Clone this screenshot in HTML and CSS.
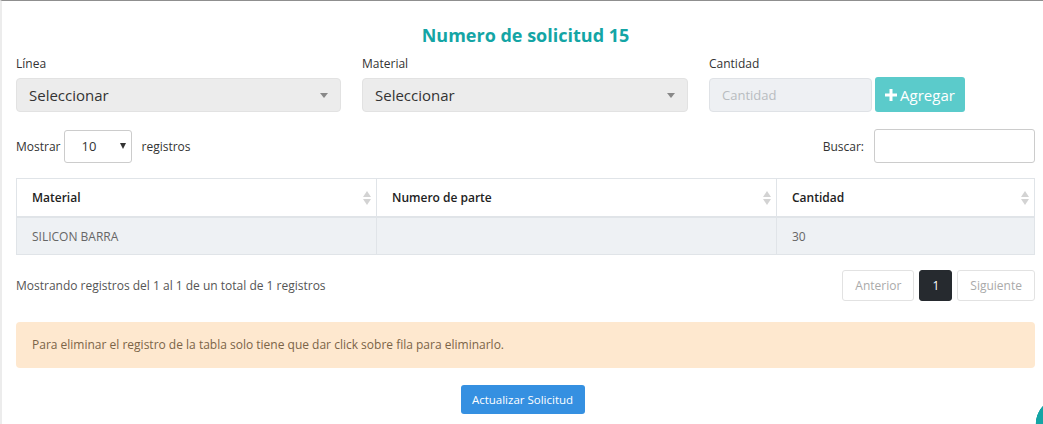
FILE: index.html
```html
<!DOCTYPE html>
<html lang="es">
<head>
<meta charset="utf-8">
<title>Solicitud</title>
<link rel="stylesheet" href="styles.css">
</head>
<body>
<div class="page">
  <h2 class="title">Numero de solicitud 15</h2>
  <div class="form-row">
    <div class="field">
      <label class="lbl">Línea</label>
      <div class="select-box"><span>Seleccionar</span><span class="caret"></span></div>
    </div>
    <div class="field">
      <label class="lbl">Material</label>
      <div class="select-box"><span>Seleccionar</span><span class="caret"></span></div>
    </div>
    <div class="field">
      <label class="lbl">Cantidad</label>
      <div class="qty-row">
        <div class="qty-input">Cantidad</div>
        <button class="btn-add"><svg class="plus" viewBox="0 0 12 12" width="12" height="12"><path d="M4.5 0h3v4.5H12v3H7.5V12h-3V7.5H0v-3h4.5z" fill="#fff"/></svg>Agregar</button>
      </div>
    </div>
  </div>

  <div class="dt-top">
    <div class="length">Mostrar <div class="len-select"><span>10</span><span class="len-caret"></span></div> registros</div>
    <div class="search">Buscar: <div class="search-input"></div></div>
  </div>

  <table class="tbl">
    <thead>
      <tr>
        <th class="c1">Material<span class="sort"></span></th>
        <th class="c2">Numero de parte<span class="sort"></span></th>
        <th class="c3">Cantidad<span class="sort"></span></th>
      </tr>
    </thead>
    <tbody>
      <tr>
        <td>SILICON BARRA</td>
        <td></td>
        <td>30</td>
      </tr>
    </tbody>
  </table>

  <div class="dt-bottom">
    <div class="info">Mostrando registros del 1 al 1 de un total de 1 registros</div>
    <div class="pager">
      <span class="pg">Anterior</span>
      <span class="pg active">1</span>
      <span class="pg">Siguiente</span>
    </div>
  </div>

  <div class="alert">Para eliminar el registro de la tabla solo tiene que dar click sobre fila para eliminarlo.</div>

  <div class="actions"><button class="btn-update">Actualizar Solicitud</button></div>
</div>
<div class="fab"></div>
</body>
</html>
```

FILE: styles.css
```css
html, body {
  margin: 0;
  padding: 0;
  height: 100%;
  overflow: hidden;
}
body {
  font-family: "Open Sans", "Liberation Sans", sans-serif;
  background: #fff;
  color: #333;
  border-top: 1px solid #8f8f8f;
  border-left: 2px solid #ececec;
  box-sizing: border-box;
}
.page {
  padding: 0 8px 0 14px;
}
.title {
  margin: 21px 0 0;
  text-align: center;
  font-size: 18px;
  font-weight: 700;
  color: #14a5a5;
  line-height: 26px;
}
.form-row {
  display: grid;
  grid-template-columns: 325px 326px 1fr;
  column-gap: 21px;
  margin-top: 8px;
}
.lbl {
  display: block;
  font-size: 12px;
  color: #333;
  line-height: 16px;
  margin-bottom: 6px;
}
.select-box {
  height: 34px;
  box-sizing: border-box;
  background: #ececec;
  border: 1px solid #e2e2e2;
  border-radius: 4px;
  display: flex;
  align-items: center;
  justify-content: space-between;
  padding: 0 12px 0 12px;
  font-size: 15px;
  color: #333;
}
.caret {
  width: 0;
  height: 0;
  border-left: 4px solid transparent;
  border-right: 4px solid transparent;
  border-top: 5px solid #888;
}
.qty-row {
  display: flex;
  gap: 3px;
}
.qty-input {
  width: 163px;
  height: 34px;
  box-sizing: border-box;
  background: #eef0f3;
  border: 1px solid #dfe2e6;
  border-radius: 4px;
  font-size: 13px;
  color: #b8bcc0;
  padding-left: 12px;
  line-height: 32px;
}
.btn-add {
  width: 90px;
  height: 35px;
  margin-top: -1px;
  border: none;
  border-radius: 3px;
  background: #5bcbcb;
  color: #fff;
  font-family: inherit;
  font-size: 15px;
  display: flex;
  align-items: center;
  justify-content: center;
  gap: 3px;
  padding: 0;
}
.plus { margin-top: 1px; }

.dt-top {
  display: flex;
  justify-content: space-between;
  align-items: center;
  margin-top: 17px;
  font-size: 12px;
  color: #333;
}
.length {
  display: flex;
  align-items: center;
  gap: 4px;
}
.len-select {
  width: 68px;
  height: 33px;
  box-sizing: border-box;
  border: 1px solid #ccc;
  border-radius: 3px;
  display: flex;
  align-items: center;
  justify-content: space-between;
  padding: 0 5px 0 16px;
  font-size: 13px;
  margin-right: 5px;
}
.len-caret {
  width: 0;
  height: 0;
  border-left: 3.5px solid transparent;
  border-right: 3.5px solid transparent;
  border-top: 6px solid #333;
}
.search {
  display: flex;
  align-items: center;
  gap: 10px;
}
.search-input {
  width: 161px;
  height: 34px;
  box-sizing: border-box;
  border: 1px solid #ccc;
  border-radius: 3px;
}

.tbl {
  width: 1019px;
  margin-top: 15px;
  border-collapse: collapse;
  font-size: 12px;
}
.tbl th, .tbl td {
  border: 1px solid #e0e4e8;
  text-align: left;
  padding: 0 15px;
}
.tbl th {
  height: 37px;
  font-weight: 600;
  color: #222;
  position: relative;
  border-bottom: 2px solid #e0e4e8;
}
.tbl td {
  height: 36px;
  background: #eef1f4;
  color: #666;
}
.tbl .c1 { width: 329px; }
.tbl .c2 { width: 369px; }
.sort {
  position: absolute;
  right: 5px;
  top: 12px;
  width: 8px;
  height: 14px;
}
.sort::before, .sort::after {
  content: "";
  position: absolute;
  left: 0;
  border-left: 4px solid transparent;
  border-right: 4px solid transparent;
}
.sort::before {
  top: 0;
  border-bottom: 6px solid #d3d3d3;
}
.sort::after {
  top: 8px;
  border-top: 6px solid #d3d3d3;
}

.dt-bottom {
  display: flex;
  justify-content: space-between;
  align-items: center;
  margin-top: 15px;
  width: 1019px;
}
.info {
  font-size: 12px;
  color: #555;
}
.pager {
  display: flex;
  gap: 5px;
}
.pg {
  display: inline-flex;
  align-items: center;
  justify-content: center;
  height: 31px;
  box-sizing: border-box;
  border: 1px solid #e2e2e2;
  border-radius: 3px;
  font-size: 12px;
  color: #aaa;
  padding: 0 12px;
}
.pg.active {
  background: #262a2f;
  border-color: #262a2f;
  color: #fff;
  width: 33px;
  padding: 0;
}

.alert {
  width: 1019px;
  box-sizing: border-box;
  margin-top: 21px;
  background: #fee8cf;
  border-radius: 4px;
  padding: 15px 16px;
  font-size: 12px;
  line-height: 16px;
  color: #7b6448;
}
.actions {
  width: 1013px;
  display: flex;
  justify-content: center;
  margin-top: 17px;
}
.btn-update {
  width: 124px;
  height: 29px;
  border: none;
  border-radius: 3px;
  background: #3590e1;
  color: #fff;
  font-family: inherit;
  font-size: 11.5px;
  padding: 0;
}
.fab {
  position: fixed;
  right: 0;
  bottom: 0;
  width: 10px;
  height: 18px;
  background: radial-gradient(circle at 29px 18px, #14a5a5 26px, transparent 26.6px);
}
```
